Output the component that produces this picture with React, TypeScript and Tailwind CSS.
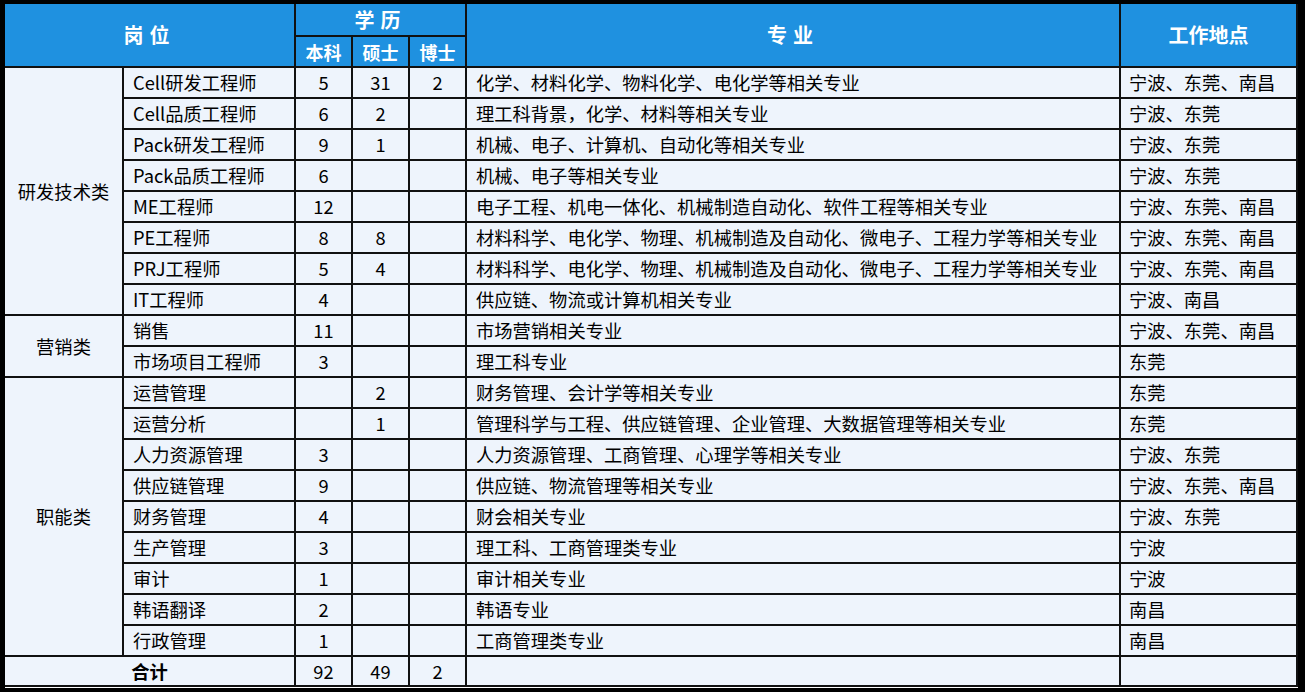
const rows: { pos: string; bk?: string; ss?: string; bs?: string; major: string; place: string }[] = [
  { pos: "Cell研发工程师", bk: "5", ss: "31", bs: "2", major: "化学、材料化学、物料化学、电化学等相关专业", place: "宁波、东莞、南昌" },
  { pos: "Cell品质工程师", bk: "6", ss: "2", major: "理工科背景，化学、材料等相关专业", place: "宁波、东莞" },
  { pos: "Pack研发工程师", bk: "9", ss: "1", major: "机械、电子、计算机、自动化等相关专业", place: "宁波、东莞" },
  { pos: "Pack品质工程师", bk: "6", major: "机械、电子等相关专业", place: "宁波、东莞" },
  { pos: "ME工程师", bk: "12", major: "电子工程、机电一体化、机械制造自动化、软件工程等相关专业", place: "宁波、东莞、南昌" },
  { pos: "PE工程师", bk: "8", ss: "8", major: "材料科学、电化学、物理、机械制造及自动化、微电子、工程力学等相关专业", place: "宁波、东莞、南昌" },
  { pos: "PRJ工程师", bk: "5", ss: "4", major: "材料科学、电化学、物理、机械制造及自动化、微电子、工程力学等相关专业", place: "宁波、东莞、南昌" },
  { pos: "IT工程师", bk: "4", major: "供应链、物流或计算机相关专业", place: "宁波、南昌" },
  { pos: "销售", bk: "11", major: "市场营销相关专业", place: "宁波、东莞、南昌" },
  { pos: "市场项目工程师", bk: "3", major: "理工科专业", place: "东莞" },
  { pos: "运营管理", ss: "2", major: "财务管理、会计学等相关专业", place: "东莞" },
  { pos: "运营分析", ss: "1", major: "管理科学与工程、供应链管理、企业管理、大数据管理等相关专业", place: "东莞" },
  { pos: "人力资源管理", bk: "3", major: "人力资源管理、工商管理、心理学等相关专业", place: "宁波、东莞" },
  { pos: "供应链管理", bk: "9", major: "供应链、物流管理等相关专业", place: "宁波、东莞、南昌" },
  { pos: "财务管理", bk: "4", major: "财会相关专业", place: "宁波、东莞" },
  { pos: "生产管理", bk: "3", major: "理工科、工商管理类专业", place: "宁波" },
  { pos: "审计", bk: "1", major: "审计相关专业", place: "宁波" },
  { pos: "韩语翻译", bk: "2", major: "韩语专业", place: "南昌" },
  { pos: "行政管理", bk: "1", major: "工商管理类专业", place: "南昌" },
];

const groups: Record<number, { name: string; span: number }> = {
  0: { name: "研发技术类", span: 8 },
  8: { name: "营销类", span: 2 },
  10: { name: "职能类", span: 9 },
};

const cell = "border-r-2 border-b-2 border-[#111] bg-[#eef4fc] flex items-center";
const head = "border-r-2 border-b-2 border-[#111] bg-[#1f91e0] text-white font-bold flex items-center justify-center";

export default function App() {
  return (
    <div className="w-[1305px] h-[694px] bg-white" style={{ fontFamily: '"Noto Sans CJK SC", "Noto Sans", sans-serif' }}>
      <div className="border-l-[5px] border-t-4 border-r-[7px] border-b-4 border-black w-[1305px]">
        <div className="grid grid-cols-[119px_172px_57px_57px_57px_654px_177px] grid-rows-[33px_31px] auto-rows-[31px] text-[18.3px] leading-none text-black">
          {/* header */}
          <div className={`${head} col-span-2 row-span-2 text-[20px] tracking-[6px]`}>岗位</div>
          <div className={`${head} col-span-3 text-[20px] tracking-[6px]`}>学历</div>
          <div className={`${head} row-span-2 text-[20px] tracking-[6px]`}>专业</div>
          <div className={`${head} row-span-2 border-r-0 text-[20px]`}>工作地点</div>
          <div className={`${head} text-[18px]`}>本科</div>
          <div className={`${head} text-[18px]`}>硕士</div>
          <div className={`${head} text-[18px]`}>博士</div>

          {/* body */}
          {rows.map((r, i) => (
            <>
              {groups[i] && (
                <div
                  key={`g${i}`}
                  className={`${cell} justify-center`}
                  style={{ gridRow: `span ${groups[i].span}` }}
                >
                  {groups[i].name}
                </div>
              )}
              <div key={`p${i}`} className={`${cell} pl-[9px]`}>{r.pos}</div>
              <div key={`a${i}`} className={`${cell} justify-center`}>{r.bk}</div>
              <div key={`b${i}`} className={`${cell} justify-center`}>{r.ss}</div>
              <div key={`c${i}`} className={`${cell} justify-center`}>{r.bs}</div>
              <div key={`m${i}`} className={`${cell} pl-[9px]`}>{r.major}</div>
              <div key={`l${i}`} className={`${cell} border-r-0 pl-[8px]`}>{r.place}</div>
            </>
          ))}

          {/* total */}
          <div className={`${cell} col-span-2 justify-center font-bold border-b-0 h-[30px]`}>合计</div>
          <div className={`${cell} justify-center border-b-0 h-[30px]`}>92</div>
          <div className={`${cell} justify-center border-b-0 h-[30px]`}>49</div>
          <div className={`${cell} justify-center border-b-0 h-[30px]`}>2</div>
          <div className={`${cell} border-b-0 h-[30px]`}></div>
          <div className={`${cell} border-r-0 border-b-0 h-[30px]`}></div>
        </div>
      </div>
    </div>
  );
}
